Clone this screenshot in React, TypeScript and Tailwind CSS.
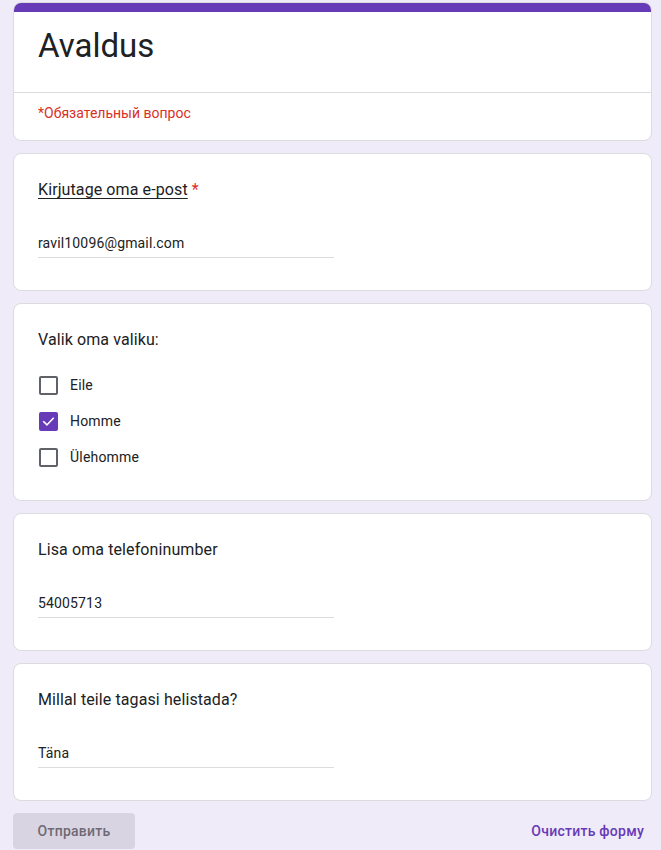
import React from "react";

const font = { fontFamily: "Roboto, 'Noto Sans', Arial, sans-serif" };

function Card({ children }: { children: React.ReactNode }) {
  return (
    <div className="bg-white border border-[#dadce0] rounded-lg px-6 pt-[24px] pb-[32px]">
      {children}
    </div>
  );
}

function TextAnswer({ title, value, underline, required }: { title: string; value: string; underline?: boolean; required?: boolean }) {
  return (
    <Card>
      <div className="text-[16px] leading-6 text-[#202124] tracking-[0.1px]">
        <span className={underline ? "underline underline-offset-[3px] decoration-1" : ""}>{title}</span>
        {required && <span className="text-[#d93025]"> *</span>}
      </div>
      <div className="mt-[31px] w-[296px] border-b border-[#dadce0] pb-[4px]">
        <div className="text-[14px] leading-5 text-[#202124] tracking-[0.15px]">{value}</div>
      </div>
    </Card>
  );
}

function Check({ checked, label }: { checked?: boolean; label: string }) {
  return (
    <div className="flex items-center h-9">
      {checked ? (
        <div className="w-[19px] h-[19px] rounded-[2px] bg-[#673ab7] flex items-center justify-center ml-px">
          <svg width="15" height="15" viewBox="0 0 24 24" fill="none">
            <path d="M4.5 12.5l5 5L19.5 7" stroke="white" strokeWidth="2.6" strokeLinecap="square" />
          </svg>
        </div>
      ) : (
        <div className="w-[19px] h-[19px] rounded-[2px] border-2 border-[#5f6368] ml-px" />
      )}
      <span className="ml-[12px] text-[14px] text-[#202124] tracking-[0.2px]">{label}</span>
    </div>
  );
}

export default function App() {
  return (
    <div className="min-h-[850px] bg-[#f0ebf8] pt-[2px] pl-[13px]" style={font}>
      <div className="w-[639px] flex flex-col gap-3">
        <div className="bg-white border border-[#dadce0] rounded-lg overflow-hidden">
          <div className="h-[10px] bg-[#673ab7] -mx-px -mt-px" />
          <div className="px-6 pt-[14px] pb-[26px] border-b border-[#dadce0]">
            <div className="text-[33px] leading-[40px] text-[#202124]">Avaldus</div>
          </div>
          <div className="px-6 pt-[10px] pb-[17px] text-[14px] leading-5 text-[#d93025]">
            *Обязательный вопрос
          </div>
        </div>

        <TextAnswer title="Kirjutage oma e-post" value="ravil10096@gmail.com" underline required />

        <div className="bg-white border border-[#dadce0] rounded-lg px-6 pt-[24px] pb-[25px]">
          <div className="text-[16px] leading-6 text-[#202124] tracking-[0.1px]">Valik oma valiku:</div>
          <div className="mt-[15px]">
            <Check label="Eile" />
            <Check label="Homme" checked />
            <Check label="Ülehomme" />
          </div>
        </div>

        <TextAnswer title="Lisa oma telefoninumber" value="54005713" />
        <TextAnswer title="Millal teile tagasi helistada?" value="Täna" />

        <div className="flex items-center justify-between">
          <div className="w-[122px] h-9 rounded bg-[#d9d4e2] flex items-center justify-center text-[14px] font-medium text-[#6e6a75] tracking-[0.25px]">
            Отправить
          </div>
          <div className="pr-2 text-[14px] font-medium text-[#673ab7] tracking-[0.25px]">Очистить форму</div>
        </div>
      </div>
    </div>
  );
}
